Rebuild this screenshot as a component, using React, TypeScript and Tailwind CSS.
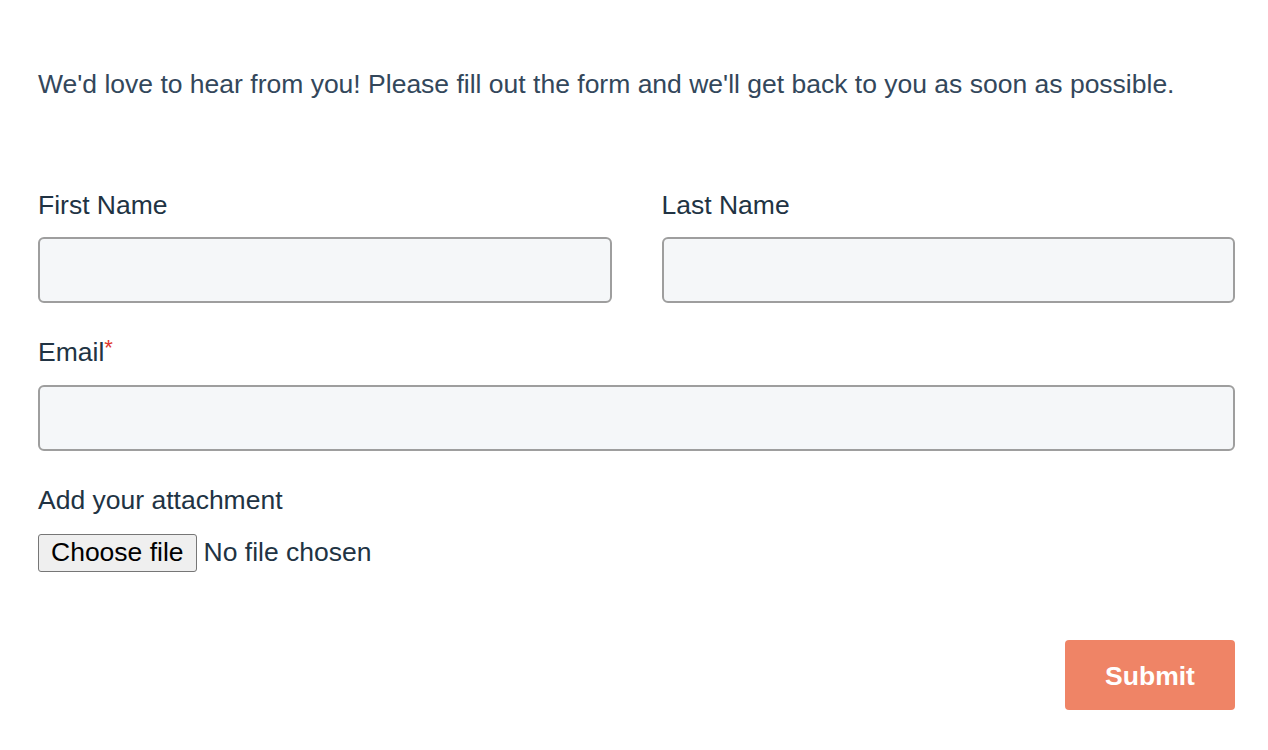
export default function App() {
  return (
    <div className="min-h-[750px] bg-white pl-[38px] pr-[33px] pt-[66px] font-['Liberation_Sans',Arial,sans-serif]">
      <p className="text-[26.5px] leading-[36px] text-[#33475b]">
        We'd love to hear from you! Please fill out the form and we'll get back to you as soon as possible.
      </p>

      <form className="mt-[87px]" onSubmit={(e) => e.preventDefault()}>
        <div className="grid grid-cols-2 gap-x-[50px]">
          <div>
            <label className="block text-[26.5px] leading-[32px] text-[#213343]">First Name</label>
            <input
              type="text"
              className="mt-[16px] block h-[66px] w-full rounded-[6px] border-2 border-[#9e9e9e] bg-[#f5f7f9] px-4 text-[24px] outline-none"
            />
          </div>
          <div>
            <label className="block text-[26.5px] leading-[32px] text-[#213343]">Last Name</label>
            <input
              type="text"
              className="mt-[16px] block h-[66px] w-full rounded-[6px] border-2 border-[#9e9e9e] bg-[#f5f7f9] px-4 text-[24px] outline-none"
            />
          </div>
        </div>

        <div className="mt-[33px]">
          <label className="block text-[26.5px] leading-[32px] text-[#213343]">
            Email<span className="align-top text-[22px] leading-[24px] text-[#e0362c]">*</span>
          </label>
          <input
            type="email"
            className="mt-[17px] block h-[66px] w-full rounded-[6px] border-2 border-[#9e9e9e] bg-[#f5f7f9] px-4 text-[24px] outline-none"
          />
        </div>

        <div className="mt-[33px]">
          <label className="block text-[26.5px] leading-[32px] text-[#213343]">Add your attachment</label>
          <div className="mt-[17px] flex items-center">
            <span className="flex h-[38px] items-center rounded-[3px] border border-[#767676] bg-[#efefef] px-[12px] text-[26.5px] text-black">
              Choose file
            </span>
            <span className="ml-[7px] text-[26.5px] text-[#213343]">No file chosen</span>
          </div>
        </div>

        <div className="mt-[67px] flex justify-end">
          <button
            type="submit"
            className="h-[70px] w-[170px] rounded-[4px] bg-[#ef8466] pt-[4px] text-[26.5px] font-bold text-white"
          >
            Submit
          </button>
        </div>
      </form>
    </div>
  );
}
